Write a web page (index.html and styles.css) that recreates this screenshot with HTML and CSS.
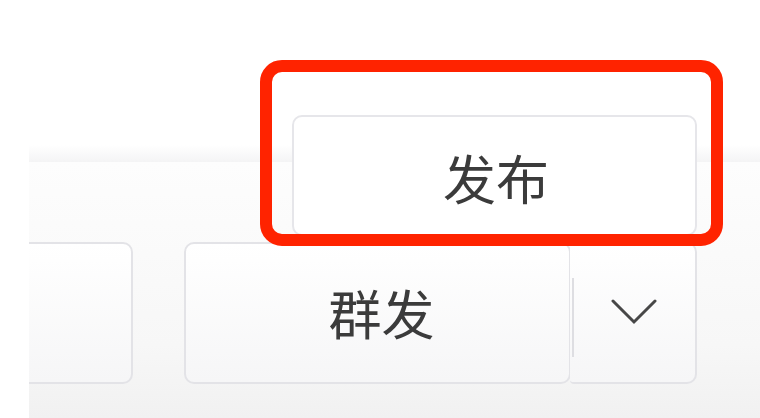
FILE: index.html
```html
<!DOCTYPE html>
<html lang="zh-CN">
<head>
<meta charset="utf-8">
<title>发布</title>
<link rel="stylesheet" href="styles.css">
</head>
<body>
<div class="stage">
  <div class="panel">
    <div class="btn-row">
      <div class="btn btn-side"></div>
      <div class="split">
        <div class="btn btn-main">群发</div>
        <div class="btn btn-drop">
          <svg class="chevron" width="46" height="26" viewBox="0 0 46 26" aria-hidden="true">
            <path d="M2 2 L23 23 L44 2" fill="none" stroke="#474747" stroke-width="3" stroke-linejoin="miter" stroke-linecap="round"/>
          </svg>
        </div>
      </div>
    </div>
  </div>
  <div class="popup">发布</div>
  <div class="highlight"></div>
</div>
</body>
</html>
```

FILE: styles.css
```css
html, body {
  margin: 0;
  padding: 0;
  background: #ffffff;
}

.stage {
  position: relative;
  width: 760px;
  height: 418px;
  overflow: hidden;
  background: #ffffff;
  font-family: "Noto Sans CJK SC", "Noto Sans", sans-serif;
  color: #3b3b3b;
  padding-top: 145px;
  padding-left: 29px;
  box-sizing: border-box;
}

.panel {
  height: 273px;
  overflow: hidden;
  background:
    linear-gradient(to bottom, #ffffff 0, #f4f4f5 17px, rgba(255,255,255,0) 17px),
    linear-gradient(to bottom, #fdfdfd 17px, #f7f7f7 200px, #f1f1f1 100%);
}

.btn-row {
  display: flex;
  padding-top: 97px;
  gap: 51px;
  margin-left: -40px;
}

.btn {
  box-sizing: border-box;
  height: 142px;
  border: 2px solid #e3e3e7;
  border-radius: 10px;
  background: linear-gradient(to bottom, #ffffff 0%, #f6f6f7 100%);
  display: flex;
  align-items: center;
  justify-content: center;
}

.btn-side {
  width: 144px;
}

.split {
  display: flex;
}

.btn-main {
  width: 387px;
  font-size: 53px;
  line-height: 1;
  padding-left: 8px;
  padding-bottom: 2px;
}

.btn-drop {
  position: relative;
  width: 127px;
  margin-left: -1px;
  border-left: none;
  border-top-left-radius: 4px;
  border-bottom-left-radius: 4px;
}

.btn-drop::before {
  content: "";
  position: absolute;
  left: 2px;
  top: 34px;
  width: 2px;
  height: 79px;
  background: #dedee2;
}

.chevron {
  display: block;
  margin-left: 2px;
  margin-bottom: 2px;
}

.popup {
  position: absolute;
  left: 292px;
  top: 115px;
  width: 405px;
  height: 121px;
  box-sizing: border-box;
  border: 2px solid #e6e6ea;
  border-radius: 10px;
  background: #ffffff;
  font-size: 53px;
  line-height: 1;
  display: flex;
  align-items: center;
  justify-content: center;
  padding-left: 3px;
  padding-top: 4px;
}

.highlight {
  position: absolute;
  left: 260px;
  top: 60px;
  width: 463px;
  height: 186px;
  box-sizing: border-box;
  border: 12px solid #ff2300;
  border-radius: 22px;
}
```
